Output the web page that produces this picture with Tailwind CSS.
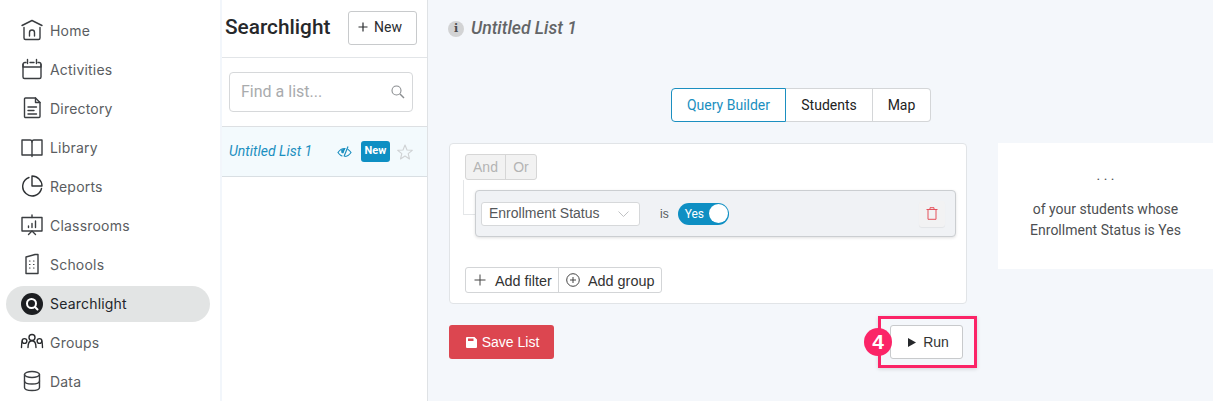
<!DOCTYPE html>
<html>
<head>
<meta charset="utf-8">
<script src="https://cdn.jsdelivr.net/npm/@tailwindcss/browser@4"></script>
</head>
<body class="m-0 overflow-hidden">
<div class="flex w-[1213px] h-[401px] overflow-hidden bg-[#f4f7fb] font-['Roboto',sans-serif]">
  <!-- Sidebar -->
  <nav class="w-[222px] h-full shrink-0 bg-white border-r-2 border-[#f2f6fb] pt-[13px] pl-[6px] pr-[10px] flex flex-col gap-[3px] font-['Inter',sans-serif] text-[14px] tracking-[0.2px] text-[#5a5d61]">
    <a class="flex items-center h-[36px] rounded-[18px] pl-[15px] gap-[7px] pb-[2px]">
      <svg class="w-[22px] h-[22px] shrink-0" viewBox="0 0 22 22" fill="none" stroke="#3a3d40" stroke-width="1.4" stroke-linecap="round" stroke-linejoin="round"><path d="M1 6.5 L11 1.5 L21 6.5"/><path d="M3 8.5 V19 a1.5 1.5 0 0 0 1.5 1.5 H17.5 a1.5 1.5 0 0 0 1.5 -1.5 V8.5"/><path d="M8.5 17 V13.5 a2.5 2.5 0 0 1 5 0 V17"/></svg>
      <span>Home</span>
    </a>
    <a class="flex items-center h-[36px] rounded-[18px] pl-[15px] gap-[7px] pb-[2px]">
      <svg class="w-[22px] h-[22px] shrink-0" viewBox="0 0 22 22" fill="none" stroke="#3a3d40" stroke-width="1.4" stroke-linecap="round" stroke-linejoin="round"><path d="M2 6.5 V19 a1.5 1.5 0 0 0 1.5 1.5 H18.5 a1.5 1.5 0 0 0 1.5 -1.5 V6.5"/><path d="M2 6.5 a2 2 0 0 1 2 -2 H5 M9 4.5 H13 M17 4.5 H18 a2 2 0 0 1 2 2 V9 H2 V6.5"/><path d="M6.5 1.5 V5.5 M15.5 1.5 V5.5"/></svg>
      <span>Activities</span>
    </a>
    <a class="flex items-center h-[36px] rounded-[18px] pl-[15px] gap-[7px] pb-[2px]">
      <svg class="w-[22px] h-[22px] shrink-0" viewBox="0 0 22 22" fill="none" stroke="#3a3d40" stroke-width="1.4" stroke-linecap="round" stroke-linejoin="round"><path d="M4.5 1 H14.5 L19 5.5 V19.5 a1 1 0 0 1 -1 1 H4.5 a1 1 0 0 1 -1 -1 V2 a1 1 0 0 1 1 -1 Z"/><path d="M14.5 1 V5.5 H19"/><path d="M7 10 H15.5 M7 13.5 H13 M7 17 H15.5"/></svg>
      <span>Directory</span>
    </a>
    <a class="flex items-center h-[36px] rounded-[18px] pl-[15px] gap-[7px] pb-[2px]">
      <svg class="w-[22px] h-[22px] shrink-0" viewBox="0 0 22 22" fill="none" stroke="#3a3d40" stroke-width="1.4" stroke-linecap="round" stroke-linejoin="round"><path d="M1 4 H9 a2 2 0 0 1 2 2 a2 2 0 0 1 2 -2 H21 V19 H1 Z"/><path d="M11 6 V20.5"/></svg>
      <span>Library</span>
    </a>
    <a class="flex items-center h-[36px] rounded-[18px] pl-[15px] gap-[7px] pb-[2px]">
      <svg class="w-[22px] h-[22px] shrink-0" viewBox="0 0 22 22" fill="none" stroke="#2f3235" stroke-width="1.4" stroke-linecap="round" stroke-linejoin="round"><path d="M8 2.5 A9.5 9.5 0 1 0 20.5 13.5"/><path d="M11 1 V11 H21 A10 10 0 0 0 11 1 Z"/></svg>
      <span>Reports</span>
    </a>
    <a class="flex items-center h-[36px] rounded-[18px] pl-[15px] gap-[7px] pb-[2px]">
      <svg class="w-[22px] h-[22px] shrink-0" viewBox="0 0 22 22" fill="none" stroke="#3a3d40" stroke-width="1.4" stroke-linecap="round" stroke-linejoin="round"><path d="M1 3.5 H21 V17 H1 Z"/><path d="M11 1 V3.5 M11 17 L7.5 20.5 M11 17 L14.5 20.5"/><path d="M7.5 13.5 V12 M11 13.5 V9.5 M14.5 13.5 V7"/></svg>
      <span>Classrooms</span>
    </a>
    <a class="flex items-center h-[36px] rounded-[18px] pl-[15px] gap-[7px] pb-[2px]">
      <svg class="w-[22px] h-[22px] shrink-0" viewBox="0 0 22 22" fill="none" stroke="#3a3d40" stroke-width="1.4" stroke-linecap="round" stroke-linejoin="round"><path d="M5 4 L14 1.5 H17 V20.5 H5 Z"/><path d="M8.5 8 H9 M12.5 8 H13 M8.5 11.5 H9 M12.5 11.5 H13 M8.5 15 H9 M12.5 15 H13" stroke-width="1.2"/></svg>
      <span>Schools</span>
    </a>
    <a class="flex items-center h-[36px] rounded-[18px] pl-[15px] gap-[7px] pb-[1px] bg-[#e2e4e4] text-[#23262a]">
      <svg class="w-[22px] h-[22px] shrink-0" viewBox="0 0 22 22" fill="none"><circle cx="11" cy="11" r="11" fill="#1c1e21"/><circle cx="10.5" cy="10.5" r="4.5" stroke="#fff" stroke-width="2"/><path d="M14 14 L16.5 16.5" stroke="#fff" stroke-width="2" stroke-linecap="round"/></svg>
      <span>Searchlight</span>
    </a>
    <a class="flex items-center h-[36px] rounded-[18px] pl-[15px] gap-[7px] pb-[2px]">
      <svg class="w-[24px] h-[22px] ml-[-1px] mr-[-1px] shrink-0" viewBox="0 0 24 22" fill="none" stroke="#2a2c2f" stroke-width="1.4" stroke-linecap="round" stroke-linejoin="round"><circle cx="12" cy="6.5" r="3"/><path d="M8 16.5 C8 12.5 9.5 9.8 12 9.8 C14.5 9.8 16 12.5 16 16.5"/><circle cx="4.5" cy="10" r="2.4"/><path d="M1.5 16.5 C1.5 14 1.6 11.5 2.3 10"/><circle cx="19.5" cy="10" r="2.4"/><path d="M22.5 16.5 C22.5 14 22.4 11.5 21.7 10"/></svg>
      <span>Groups</span>
    </a>
    <a class="flex items-center h-[36px] rounded-[18px] pl-[15px] gap-[7px] pb-[2px]">
      <svg class="w-[22px] h-[22px] shrink-0" viewBox="0 0 22 22" fill="none" stroke="#3a3d40" stroke-width="1.4" stroke-linecap="round" stroke-linejoin="round"><ellipse cx="11" cy="4.5" rx="7.5" ry="3"/><path d="M3.5 4.5 V17.5 C3.5 19.5 7 20.5 11 20.5 C15 20.5 18.5 19.5 18.5 17.5 V4.5"/><path d="M3.5 11 C3.5 13 7 14 11 14 C15 14 18.5 13 18.5 11"/></svg>
      <span>Data</span>
    </a>
  </nav>

  <!-- List panel -->
  <section class="w-[206px] h-full shrink-0 bg-white border-r border-[#dfe2e5] flex flex-col">
    <div class="h-[58px] shrink-0 border-b border-[#e2e5e8] flex items-center justify-between pl-[3px] pr-[10px] pb-[2px]">
      <h1 class="text-[20.8px] font-medium text-[#26282b]">Searchlight</h1>
      <button class="w-[69px] h-[34px] bg-white border border-[#c8cacc] rounded-[3px] flex items-center justify-center gap-[6px] pr-[5px] pb-[1px] text-[14px] text-[#2a2c2f]">
        <svg class="w-[10px] h-[10px]" viewBox="0 0 10 10" stroke="#2a2c2f" stroke-width="1.2"><path d="M5 0.5 V9.5 M0.5 5 H9.5"/></svg>
        <span>New</span>
      </button>
    </div>
    <div class="h-[69px] shrink-0 border-b border-[#dde0e3] px-[7px] pt-[14px]">
      <div class="w-[184px] h-[40px] border border-[#d6d8da] rounded-[4px] bg-white flex items-center justify-between pl-[11px] pr-[7px]">
        <span class="text-[16px] text-[#a9abad]">Find a list...</span>
        <svg class="w-[14px] h-[14px]" viewBox="0 0 14 14" fill="none" stroke="#8a8d90" stroke-width="1.1"><circle cx="5.5" cy="5.5" r="4.5"/><path d="M9 9 L13 13" stroke-width="1.5"/></svg>
      </div>
    </div>
    <div class="h-[50px] shrink-0 bg-[#f3fafd] border-b border-[#d9dfe3] flex items-center pl-[7px] pr-[8px]">
      <span class="text-[14px] italic text-[#1b8fc0] w-[108px] shrink-0">Untitled List 1</span>
      <svg class="w-[15px] h-[12px] shrink-0" viewBox="0 0 15 12" fill="none" stroke="#1b8fc0" stroke-width="1.2" stroke-linejoin="round"><path d="M1 6.5 C3 3.5 5 2.5 7.5 2.5 C10 2.5 12 3.5 14 6.5 C12 9.5 10 10.5 7.5 10.5 C5 10.5 3 9.5 1 6.5 Z"/><path fill="#1b8fc0" d="M4 4.5 C5 3.2 6.5 2.5 8.5 2.5 L6.5 7.5 L4.5 7 Z" stroke="none"/><path d="M10.5 0.5 L6 11.5" stroke="#f3fafd" stroke-width="2"/><path d="M11 0.5 L7 10.5"/></svg>
      <span class="ml-[9px] w-[29px] h-[21px] shrink-0 rounded-[3px] bg-[#0e8fc3] text-white text-[11px] font-bold flex items-center justify-center">New</span>
      <svg class="ml-[7px] w-[16px] h-[16px] shrink-0" viewBox="0 0 16 16" fill="none" stroke="#cfd2d4" stroke-width="1.1" stroke-linejoin="round"><path d="M8 1 L10 6 L15.3 6.3 L11.2 9.7 L12.5 15 L8 12 L3.5 15 L4.8 9.7 L0.7 6.3 L6 6 Z"/></svg>
    </div>
  </section>

  <!-- Main -->
  <main class="flex-1 min-w-0 flex flex-col pl-[21px] relative">
    <div class="h-[56px] ml-[-1px] pt-[1px] flex items-center gap-[7px] shrink-0">
      <span class="w-[16px] h-[16px] rounded-full bg-[#d2d3d4] flex items-center justify-center text-[11px] font-bold text-[#4a4c4e] font-['DejaVu_Serif',serif] leading-none">i</span>
      <span class="text-[17.6px] italic font-medium text-[#636567]">Untitled List 1</span>
    </div>
    <div class="mt-[32px] h-[34px] flex shrink-0 text-[14px] ml-[222px]">
      <span class="w-[115px] flex items-center justify-center border border-[#1b8fc0] rounded-l-[4px] bg-white text-[#1b8fc0]">Query Builder</span>
      <span class="w-[87px] flex items-center justify-center border-y border-r border-[#d4d6d8] bg-white text-[#222]">Students</span>
      <span class="w-[58px] flex items-center justify-center border-y border-r border-[#d4d6d8] rounded-r-[4px] bg-white text-[#222]">Map</span>
    </div>
    <div class="mt-[21px] flex gap-[31px] items-start">
      <div class="w-[518px] shrink-0">
        <div class="h-[161px] bg-white border border-[#e1e4e7] rounded-[4px] pt-[10px] pl-[15px] pr-[10px] relative font-['Liberation_Sans',sans-serif]">
          <div class="flex w-fit h-[26px] bg-[#f2f2f2] border border-[#d6d6d6] rounded-[3px] text-[14px] text-[#b4b4b4]">
            <span class="w-[40px] flex items-center justify-center border-r border-[#d6d6d6]">And</span>
            <span class="w-[30px] flex items-center justify-center">Or</span>
          </div>
          <div class="absolute left-[13px] top-[36px] w-[14px] h-[35px] border-l border-b border-[#e4e6e8]"></div>
          <div class="relative ml-[10px] mt-[10px] w-[481px] h-[47px] bg-[#f0f2f5] border border-[#cbced1] rounded-[4px] shadow-[0_1px_3px_rgba(0,0,0,0.12)] flex items-center pl-[5px] pr-[10px]">
            <div class="w-[159px] h-[24px] bg-white border border-[#d6d8da] rounded-[3px] flex items-center justify-between pl-[7px] pr-[10px] text-[14px] text-[#55585b] shrink-0">
              <span>Enrollment Status</span>
              <svg class="w-[11px] h-[6px]" viewBox="0 0 11 6" fill="none" stroke="#b9bbbd" stroke-width="0.9"><path d="M0.5 0.5 L5.5 5.5 L10.5 0.5"/></svg>
            </div>
            <span class="ml-[20px] text-[12px] text-[#55585b]">is</span>
            <div class="ml-[9px] w-[51px] h-[22px] rounded-[11px] bg-[#0e8fc3] flex items-center justify-between pl-[7px] pr-[1px] shrink-0">
              <span class="text-[12px] font-normal text-white font-['Roboto',sans-serif]">Yes</span>
              <span class="w-[19px] h-[19px] rounded-full bg-white"></span>
            </div>
            <div class="ml-auto w-[26px] h-[26px] rounded-[3px] bg-[#f2f2f3] shadow-[0_1px_1px_rgba(0,0,0,0.06)] flex items-center justify-center">
              <svg class="w-[12px] h-[13px]" viewBox="0 0 12 13" fill="none" stroke="#e4525c" stroke-width="1"><path d="M0.5 2.5 H11.5 M4 2.5 V0.7 H8 V2.5 M2 2.5 V12.3 H10 V2.5"/></svg>
            </div>
          </div>
          <div class="mt-[30px] flex w-fit h-[26px] border border-[#d3d5d7] rounded-[3px] text-[14.4px] leading-[26px] text-[#333]">
            <span class="w-[93px] flex items-center gap-[9px] pl-[8px] border-r border-[#d3d5d7]">
              <svg class="w-[12px] h-[12px]" viewBox="0 0 12 12" stroke="#444" stroke-width="1"><path d="M6 0.5 V11.5 M0.5 6 H11.5"/></svg>
              <span class="pt-[1px]">Add filter</span>
            </span>
            <span class="w-[102px] flex items-center gap-[8px] pl-[7px]">
              <svg class="w-[14px] h-[14px]" viewBox="0 0 14 14" fill="none" stroke="#444" stroke-width="1"><circle cx="7" cy="7" r="6.3"/><path d="M7 4 V10 M4 7 H10"/></svg>
              <span class="pt-[1px]">Add group</span>
            </span>
          </div>
        </div>
        <div class="mt-[21px] flex justify-between items-center font-['Liberation_Sans',sans-serif]">
          <button class="w-[105px] h-[34px] rounded-[3px] bg-[#dc4650] text-white text-[14px] flex items-center justify-center gap-[5px] pl-[2px]">
            <svg class="w-[11px] h-[11px]" viewBox="0 0 11 11"><path fill="#fff" fill-rule="evenodd" d="M1 0 H8.5 L11 2.5 V10 a1 1 0 0 1 -1 1 H1 a1 1 0 0 1 -1 -1 V1 a1 1 0 0 1 1 -1 Z M2 1.5 V4 H7.5 V1.5 Z"/></svg>
            <span>Save List</span>
          </button>
          <button class="mr-[4px] w-[73px] h-[34px] rounded-[3px] bg-white border border-[#c8cacc] text-[14px] text-[#333] flex items-center justify-center gap-[7px] pl-[4px]">
            <svg class="w-[8px] h-[9px]" viewBox="0 0 8 9"><path fill="#26282b" d="M0 0 L8 4.5 L0 9 Z"/></svg>
            <span>Run</span>
          </button>
        </div>
      </div>
      <div class="w-[215px] h-[126px] shrink-0 bg-white flex flex-col items-center pt-[22px] text-[14px] leading-[21px] text-[#4d4f52] font-['Roboto',sans-serif] text-center">
        <span class="leading-[20px] mb-[14px]">. . .</span>
        <span>of your students whose</span>
        <span>Enrollment Status is Yes</span>
      </div>
    </div>
    <!-- annotation -->
    <div class="absolute left-[450px] top-[316px] w-[99px] h-[52px] border-[3px] border-[#fb2467] shadow-[0_1px_4px_rgba(0,0,0,0.15)]"></div>
    <div class="absolute left-[436px] top-[328px] w-[28px] h-[28px] rounded-full bg-[#fb2467] text-white font-bold text-[21px] flex items-center justify-center font-['Liberation_Sans',sans-serif]">4</div>
  </main>
</div>
</body>
</html>
